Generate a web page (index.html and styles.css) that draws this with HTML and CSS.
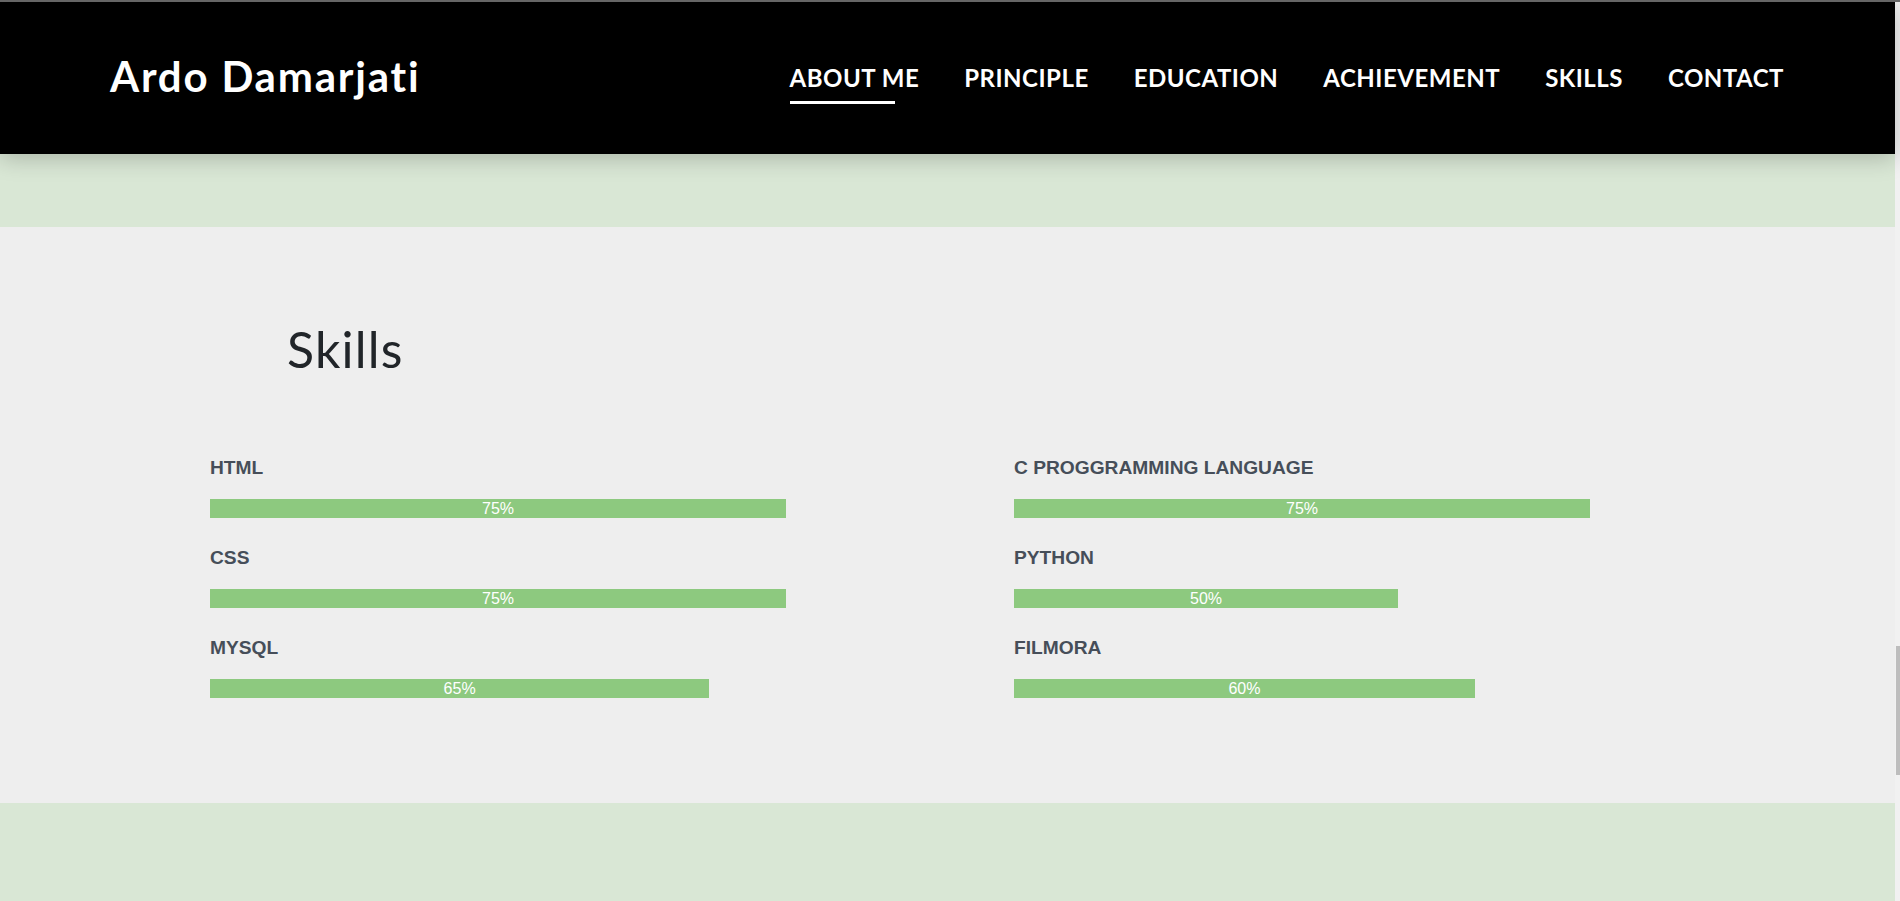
FILE: index.html
```html
<!DOCTYPE html>
<html lang="en">
<head>
<meta charset="utf-8">
<title>Ardo Damarjati</title>
<link rel="stylesheet" href="styles.css">
</head>
<body>
<div class="frame">
  <div class="page">
    <header class="header">
      <div class="logo">Ardo Damarjati</div>
      <nav class="nav">
        <a class="nav-link active" href="#">ABOUT ME</a>
        <a class="nav-link" href="#">PRINCIPLE</a>
        <a class="nav-link" href="#">EDUCATION</a>
        <a class="nav-link" href="#">ACHIEVEMENT</a>
        <a class="nav-link" href="#">SKILLS</a>
        <a class="nav-link" href="#">CONTACT</a>
      </nav>
    </header>
    <div class="spacer-top"></div>
    <section class="skills">
      <h2 class="skills-title">Skills</h2>
      <div class="skills-grid">
        <div class="skill">
          <div class="skill-name">HTML</div>
          <div class="track"><div class="bar" style="width:75%">75%</div></div>
        </div>
        <div class="skill">
          <div class="skill-name">C PROGGRAMMING LANGUAGE</div>
          <div class="track"><div class="bar" style="width:75%">75%</div></div>
        </div>
        <div class="skill">
          <div class="skill-name">CSS</div>
          <div class="track"><div class="bar" style="width:75%">75%</div></div>
        </div>
        <div class="skill">
          <div class="skill-name">PYTHON</div>
          <div class="track"><div class="bar" style="width:50%">50%</div></div>
        </div>
        <div class="skill">
          <div class="skill-name">MYSQL</div>
          <div class="track"><div class="bar" style="width:65%">65%</div></div>
        </div>
        <div class="skill">
          <div class="skill-name">FILMORA</div>
          <div class="track"><div class="bar" style="width:60%">60%</div></div>
        </div>
      </div>
    </section>
    <div class="spacer-bottom"></div>
  </div>
  <div class="scrollbar"><div class="thumb"></div></div>
</div>
</body>
</html>
```
FILE: styles.css
```css
* { box-sizing: border-box; }
html, body { margin: 0; padding: 0; }
body {
  background: #d9e7d5;
  border-top: 2px solid #666666;
  height: 901px;
  overflow: hidden;
}
.frame {
  display: flex;
  height: 899px;
}
.page {
  flex: 1;
  display: flex;
  flex-direction: column;
  background: #d9e7d5;
}
.scrollbar {
  width: 5px;
  background: #f1f1f1;
  padding-top: 644px;
  padding-left: 1px;
}
.thumb {
  width: 4px;
  height: 129px;
  background: #bdbdbd;
}
.header {
  position: relative;
  z-index: 2;
  height: 152px;
  background: #000;
  display: flex;
  align-items: center;
  justify-content: space-between;
  padding: 0 111px 0 110px;
  box-shadow: 0 4px 22px rgba(0, 0, 0, 0.22);
  font-family: "Lato", "Open Sans", sans-serif;
}
.logo {
  color: #fff;
  font-size: 42px;
  font-weight: 700;
  letter-spacing: 1.8px;
  margin-top: -4px;
}
.nav {
  display: flex;
  gap: 45px;
  margin-top: -2px;
}
.nav-link {
  position: relative;
  color: #fff;
  text-decoration: none;
  font-size: 24px;
  font-weight: 700;
  letter-spacing: 0.5px;
}
.nav-link.active::after {
  content: "";
  position: absolute;
  left: 0;
  bottom: -12px;
  width: 81%;
  height: 3px;
  background: #fff;
}
.spacer-top { height: 73px; }
.spacer-bottom { flex: 1; }
.skills {
  height: 576px;
  background: #eeeeee;
  padding: 92px 0 0 210px;
}
.skills-title {
  margin: 0 0 78px 77px;
  font-family: "Lato", "Open Sans", sans-serif;
  font-weight: 400;
  font-size: 50px;
  line-height: 60px;
  letter-spacing: 1.2px;
  color: #212529;
}
.skills-grid {
  display: grid;
  grid-template-columns: 768px 768px;
  column-gap: 36px;
}
.skill {
  margin-bottom: 29px;
}
.skill-name {
  font-family: "Liberation Sans", Arial, sans-serif;
  font-weight: 700;
  font-size: 19.2px;
  line-height: 22px;
  color: #464e59;
  margin-bottom: 20px;
}
.track {
  width: 768px;
  height: 19px;
}
.bar {
  height: 19px;
  background: #8dc97f;
  color: #fff;
  text-align: center;
  font-family: "Liberation Sans", Arial, sans-serif;
  font-size: 16px;
  line-height: 19px;
}
```
